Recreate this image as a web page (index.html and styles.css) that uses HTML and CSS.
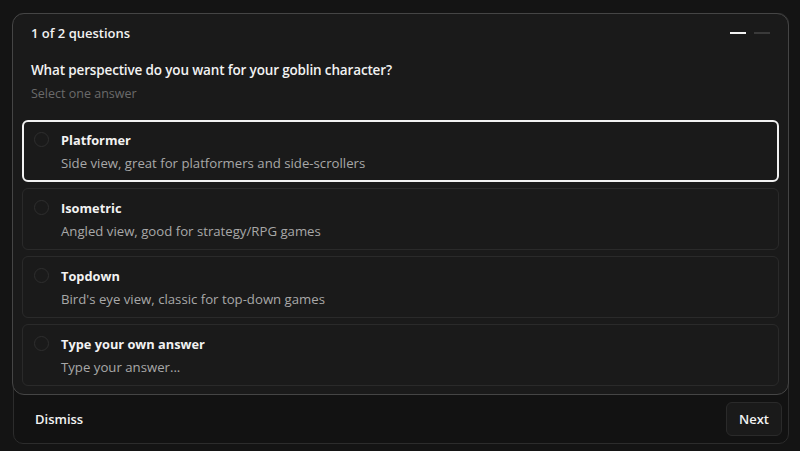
FILE: index.html
```html
<!DOCTYPE html>
<html>
<head>
<meta charset="utf-8">
<link rel="stylesheet" href="styles.css">
</head>
<body>
<div class="shell">
  <div class="card">
    <div class="head">
      <span class="count">1 of 2 questions</span>
      <div class="steps"><span class="step on"></span><span class="step"></span></div>
    </div>
    <div class="question">What perspective do you want for your goblin character?</div>
    <div class="hint">Select one answer</div>
    <div class="options">
      <div class="option selected">
        <span class="radio"></span>
        <div class="otext"><div class="otitle">Platformer</div><div class="odesc">Side view, great for platformers and side-scrollers</div></div>
      </div>
      <div class="option">
        <span class="radio"></span>
        <div class="otext"><div class="otitle">Isometric</div><div class="odesc">Angled view, good for strategy/RPG games</div></div>
      </div>
      <div class="option">
        <span class="radio"></span>
        <div class="otext"><div class="otitle">Topdown</div><div class="odesc">Bird's eye view, classic for top-down games</div></div>
      </div>
      <div class="option">
        <span class="radio"></span>
        <div class="otext"><div class="otitle">Type your own answer</div><div class="odesc">Type your answer...</div></div>
      </div>
    </div>
  </div>
  <div class="footer">
    <span class="dismiss">Dismiss</span>
    <span class="next">Next</span>
  </div>
</div>
</body>
</html>
```
FILE: styles.css
```css
* { box-sizing: border-box; }
html, body { margin: 0; padding: 0; }
body {
  background: #141414;
  font-family: "Open Sans", "Noto Sans", sans-serif;
  color: #f2f2f2;
  width: 800px;
  height: 451px;
  overflow: hidden;
}
.shell {
  margin: 13px 12px 0 13px;
  width: 776px;
  height: 431px;
  border: 1px solid #2c2c2c;
  border-radius: 10px;
  background: #121212;
  display: flex;
  flex-direction: column;
}
.card {
  margin: -1px -1px 0 -2px;
  height: 382px;
  border: 1px solid #454545;
  border-radius: 12px;
  background: #1a1a1a;
  padding: 9px 9px 0 9px;
}
.head {
  display: flex;
  justify-content: space-between;
  align-items: center;
  height: 20px;
  padding: 0 9px 0 9px;
}
.count { font-size: 13px; font-weight: 600; }
.steps { display: flex; gap: 8px; }
.step { width: 16px; height: 2px; background: #3a3a3a; }
.step.on { background: #f2f2f2; }
.question {
  margin-top: 17px;
  padding-left: 9px;
  font-size: 13.5px;
  font-weight: 600;
  letter-spacing: -0.15px;
  line-height: 20px;
}
.hint {
  margin-top: 5px;
  padding-left: 9px;
  font-size: 12.5px;
  color: #6a6a6a;
  line-height: 18px;
}
.options {
  margin-top: 17px;
  display: flex;
  flex-direction: column;
  gap: 6px;
}
.option {
  height: 62px;
  border: 1px solid #2a2a2a;
  border-radius: 6px;
  display: flex;
  padding: 10px 10px 0 11px;
  gap: 12px;
}
.option.selected {
  border: 2px solid #f2f2f2;
  padding: 9px 9px 0 10px;
}
.radio {
  width: 15px;
  height: 15px;
  border-radius: 50%;
  border: 1px solid #2e2e2e;
  margin-top: 1px;
  flex: none;
}
.otitle { font-size: 12.8px; font-weight: 700; line-height: 18px; }
.odesc { font-size: 13.2px; color: #a8a8a8; line-height: 18px; margin-top: 5px; }
.footer {
  flex: 1;
  display: flex;
  justify-content: space-between;
  align-items: center;
  padding: 0 6px 0 21px;
}
.dismiss { font-size: 13px; font-weight: 600; }
.next {
  font-size: 13px;
  font-weight: 600;
  width: 56px;
  height: 34px;
  border: 1px solid #2a2a2a;
  border-radius: 6px;
  background: #1a1a1a;
  display: flex;
  align-items: center;
  justify-content: center;
}
```
